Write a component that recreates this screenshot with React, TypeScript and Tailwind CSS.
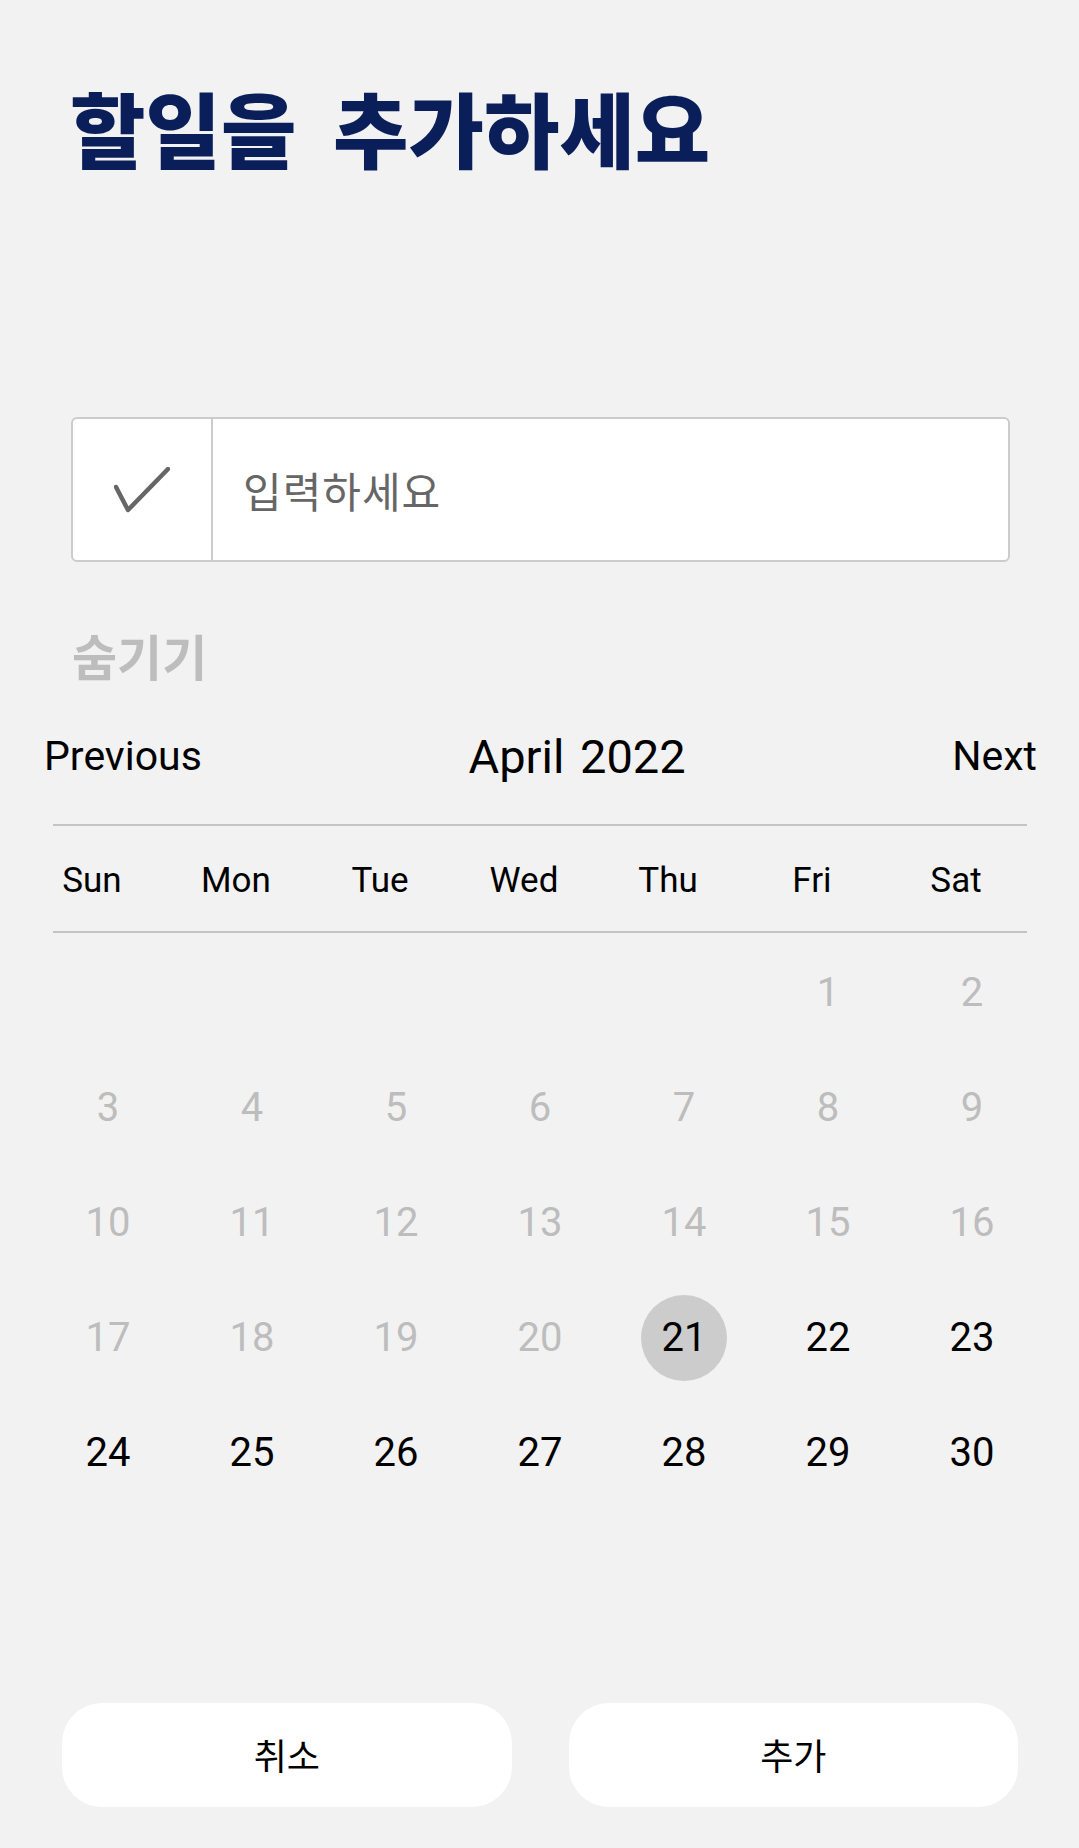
const weekdays = ["Sun", "Mon", "Tue", "Wed", "Thu", "Fri", "Sat"];

const cells: (number | null)[] = [
  null, null, null, null, null,
  ...Array.from({ length: 30 }, (_, i) => i + 1),
];

const today = 21;

export default function App() {
  return (
    <div className="flex h-[1848px] w-full flex-col bg-[#f2f2f2] font-['Roboto','Noto_Sans_CJK_KR',sans-serif]">
      <h1 className="ml-[70px] mt-[86px] font-['Noto_Sans_CJK_KR',sans-serif] text-[82px] font-black leading-none text-[#0a1e5a] [word-spacing:18px]">
        할일을 추가하세요
      </h1>

      <div className="ml-[71px] mr-[69px] mt-[249px] flex h-[145px] rounded-[6px] border-2 border-[#cccccc] bg-white">
        <div className="flex w-[140px] items-center justify-center border-r-2 border-[#cccccc]">
          <svg width="56" height="46" viewBox="0 0 56 46" fill="none">
            <path
              d="M2 20 L14 43 L54 2"
              stroke="#666666"
              strokeWidth="4.5"
              strokeLinecap="round"
              strokeLinejoin="round"
            />
          </svg>
        </div>
        <div className="flex items-center pl-[30px] font-['Noto_Sans_CJK_KR',sans-serif] text-[42px] tracking-[1px] text-[#666666]">
          입력하세요
        </div>
      </div>

      <div className="ml-[72px] mt-[68px] font-['Noto_Sans_CJK_KR',sans-serif] text-[49px] font-bold leading-none text-[#bdbdbd]">
        숨기기
      </div>

      <div className="mt-[28px] flex h-[100px] items-center justify-between pl-[44px] pr-[42px] text-black">
        <button className="text-[41px]">Previous</button>
        <div className="text-[47px] [word-spacing:4px]">April 2022</div>
        <button className="text-[41px]">Next</button>
      </div>

      <div className="ml-[53px] mt-[17px] h-[2px] w-[974px] bg-[#c4c4c4]" />
      <div className="ml-[20px] grid h-[105px] w-[1008px] grid-cols-7 items-center">
        {weekdays.map((d) => (
          <div key={d} className="pt-[5px] text-center text-[35px] text-black">
            {d}
          </div>
        ))}
      </div>
      <div className="ml-[53px] h-[2px] w-[974px] bg-[#c4c4c4]" />

      <div className="ml-[36px] mt-[2px] grid w-[1008px] grid-cols-7">
        {cells.map((n, i) => (
          <div key={i} className="flex h-[115px] items-center justify-center text-[40px]">
            {n === null ? null : n === today ? (
              <span className="flex h-[86px] w-[86px] items-center justify-center rounded-full bg-[#cccccc] text-black">
                {n}
              </span>
            ) : (
              <span className={n < today ? "text-[#bdbdbd]" : "text-black"}>{n}</span>
            )}
          </div>
        ))}
      </div>

      <div className="mb-[41px] ml-[62px] mr-[61px] mt-auto flex gap-[57px] font-['Noto_Sans_CJK_KR',sans-serif]">
        <button className="h-[104px] flex-1 rounded-[40px] bg-white pb-[2px] text-[36px] text-black">취소</button>
        <button className="h-[104px] flex-1 rounded-[40px] bg-white pb-[2px] text-[36px] text-black">추가</button>
      </div>
    </div>
  );
}
